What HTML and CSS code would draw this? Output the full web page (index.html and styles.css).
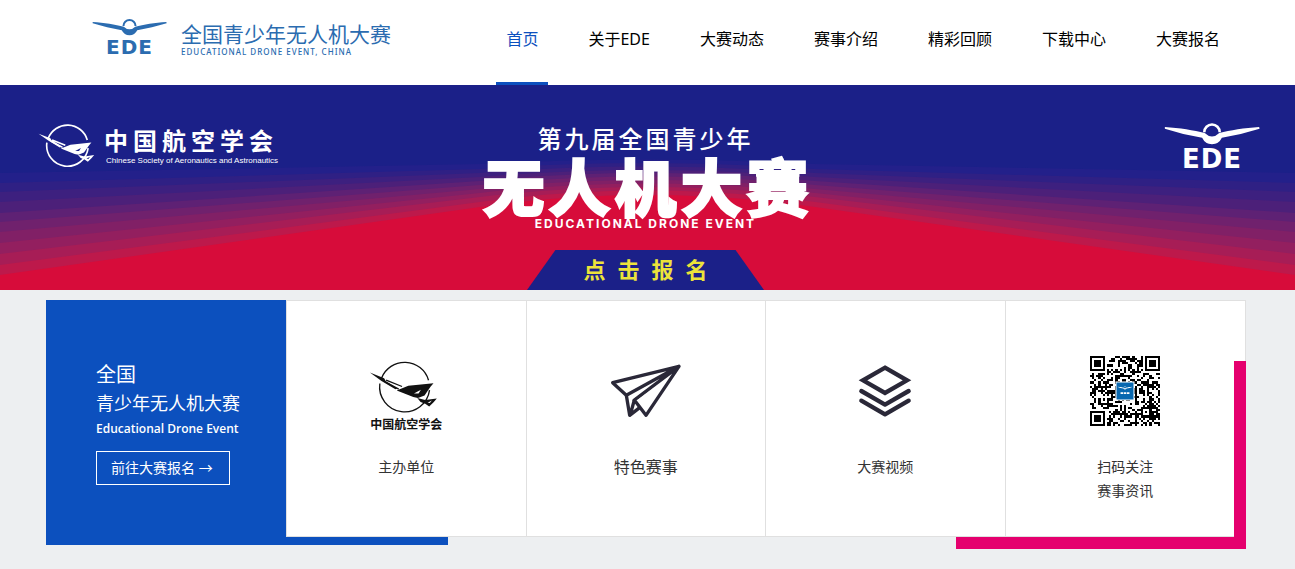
FILE: index.html
```html
<!DOCTYPE html>
<html lang="zh-CN">
<head>
  <meta charset="UTF-8">
  <meta name="viewport" content="width=device-width, initial-scale=1">
  <title>全国青少年无人机大赛</title>
  <link rel="stylesheet" href="styles.css">
</head>
<body>

  <!-- shared logo shapes -->
  <svg class="defs" aria-hidden="true">
    <symbol id="wings" viewBox="36 54 224 52">
      <path d="M130 77A18 18 0 0 1 166 77" fill="none" stroke="currentColor" stroke-width="6"/>
      <path d="M38 65C72 67 106 73 131 79Q139 87 148 87Q157 87 165 79C190 73 224 67 258 65L259 69L215 81L171 90Q164 105 148 105Q132 105 125 90L81 81L38 69Z" fill="currentColor"/>
    </symbol>
    <symbol id="plane-ring" viewBox="87 60 225 160">
      <path d="M124 112A75 75 0 0 1 266 118M269 148A75 75 0 0 1 119 128" fill="none" stroke="currentColor"/>
      <path d="M89 95L132 112L137 121L172 143L166 145L124 120Z" fill="currentColor"/>
      <path d="M138 118L186 137M134 122L176 145" fill="none" stroke="currentColor"/>
      <path fill-rule="evenodd" d="M170 149L205 135L281 127L272 138L254 164L234 172L220 169ZM222 158L236 158L243 147Z" fill="currentColor"/>
      <path fill-rule="evenodd" d="M232 172L256 178L291 173L282 184L268 197L256 189L242 184ZM263 186L270 187L276 179Z" fill="currentColor"/>
    </symbol>
  </svg>

  <header class="header">
    <a class="logo" href="#">
      <span class="ede">
        <svg class="ede-wings"><use href="#wings"/></svg>
        <b>EDE</b>
      </span>
      <span class="logo-text">
        <strong>全国青少年无人机大赛</strong>
        <small>EDUCATIONAL DRONE EVENT, CHINA</small>
      </span>
    </a>
    <nav class="nav">
      <a class="active" href="#">首页</a>
      <a href="#">关于EDE</a>
      <a href="#">大赛动态</a>
      <a href="#">赛事介绍</a>
      <a href="#">精彩回顾</a>
      <a href="#">下载中心</a>
      <a href="#">大赛报名</a>
    </nav>
  </header>

  <section class="banner">
    <svg class="rays" viewBox="0 0 1295 205" preserveAspectRatio="none" aria-hidden="true">
      <path fill="#23208a" d="M0 88L480 79Q645 70 815 79L1295 88V205H0Z"/>
      <path fill="#2f2084" d="M0 98L480 84Q645 72 815 84L1295 98V205H0Z"/>
      <path fill="#3d207f" d="M0 107L480 88Q645 75 815 88L1295 107V205H0Z"/>
      <path fill="#4c2079" d="M0 117L480 92Q645 78 815 92L1295 117V205H0Z"/>
      <path fill="#5e2174" d="M0 128L480 96Q645 80 815 96L1295 128V205H0Z"/>
      <path fill="#70216d" d="M0 137L480 100Q645 83 815 100L1295 137V205H0Z"/>
      <path fill="#812066" d="M0 147L480 104Q645 86 815 104L1295 147V205H0Z"/>
      <path fill="#931f5f" d="M0 158L480 108Q645 89 815 108L1295 158V205H0Z"/>
      <path fill="#a71d56" d="M0 169L480 112Q645 92 815 112L1295 169V205H0Z"/>
      <path fill="#bd194b" d="M0 180L480 117Q645 94 815 117L1295 180V205H0Z"/>
      <path fill="#d70c3a" d="M0 190L480 122Q645 98 815 122L1295 190V205H0Z"/>
    </svg>
    <div class="society">
      <svg class="society-icon"><use href="#plane-ring"/></svg>
      <div class="society-text">
        <strong>中国航空学会</strong>
        <small>Chinese Society of Aeronautics and Astronautics</small>
      </div>
    </div>
    <div class="headline">
      <h2>第九届全国青少年</h2>
      <h1>无人机大赛</h1>
      <p>EDUCATIONAL DRONE EVENT</p>
      <a class="signup" href="#">点击报名</a>
    </div>
    <div class="ede ede-large">
      <svg class="ede-wings"><use href="#wings"/></svg>
      <b>EDE</b>
    </div>
  </section>

  <main class="entry">
    <div class="intro">
      <h3>全国</h3>
      <h4>青少年无人机大赛</h4>
      <p>Educational Drone Event</p>
      <a href="#">前往大赛报名 →</a>
    </div>
    <div class="cards">
      <a class="card" href="#">
        <span class="icon organizer">
          <svg class="organizer-icon"><use href="#plane-ring"/></svg>
          <b>中国航空学会</b>
        </span>
        <span class="label">主办单位</span>
      </a>
      <a class="card" href="#">
        <span class="icon">
          <svg width="72" height="56" viewBox="60 56 216 168" fill="none" stroke="#2a2838" stroke-width="10" stroke-linejoin="round">
            <path d="M68 115L267 66L168 213L133 167L267 66L109 153Z"/>
            <path d="M109 153L119 213L150 189M133 167L122 207" />
            <path d="M128 168L267 66L145 162Z" fill="#2a2838" stroke-width="2"/>
          </svg>
        </span>
        <span class="label label-big">特色赛事</span>
      </a>
      <a class="card" href="#">
        <span class="icon">
          <svg width="54" height="54" viewBox="58 57 162 162" fill="none" stroke="#2a2838" stroke-width="13" stroke-linecap="round">
            <path d="M139 68L205 106L139 144L73 106Z"/>
            <path d="M68 138L139 179L210 138M68 167L139 208L210 167" stroke-linejoin="round"/>
          </svg>
        </span>
        <span class="label">大赛视频</span>
      </a>
      <div class="card">
        <span class="icon">
          <svg id="qr" width="70" height="70" viewBox="0 0 33 33">
            <path id="qrCells" fill="#000" shape-rendering="crispEdges"/>
            <path fill="#fff" d="M12 12h9v9h-9z"/>
            <path fill="#0868b0" d="M12.500 12.500h8v8h-8z"/>
            <g color="#fff"><use href="#wings" x="13" y="14" width="7" height="2"/></g>
            <path stroke="#fff" stroke-width=".8" stroke-dasharray="1.200 .3" d="M14.400 17.500h4.200"/>
          </svg>
        </span>
        <span class="label">扫码关注<br>赛事资讯</span>
      </div>
    </div>
  </main>

  <script>
  (function() {
    const size = 33;
    let seed = 2023;
    let d = '';

    // concentric squares: finder (r = 3) and alignment (r = 2) marks
    function mark(x, y, cx, cy, r) {
      const dist = Math.max(Math.abs(x - cx), Math.abs(y - cy));
      if (dist > r + (r === 3 ? 1 : 0)) return null;
      return r === 3 ? dist === 3 || dist < 2 : dist !== 1;
    }

    for (let y = 0; y < size; y++) {
      for (let x = 0; x < size; x++) {
        seed = (seed * 1103515245 + 12345) % 2147483648;
        const on = mark(x, y, 3, 3, 3) ?? mark(x, y, 29, 3, 3) ?? mark(x, y, 3, 29, 3)
          ?? mark(x, y, 26, 26, 2)
          ?? (x === 6 || y === 6 ? (x + y) % 2 === 0 : seed / 2147483648 > 0.48);
        if (on) d += 'M' + x + ' ' + y + 'h1v1h-1z';
      }
    }
    document.getElementById('qrCells').setAttribute('d', d);
  })();
  </script>

</body>
</html>
```

FILE: styles.css
```css
* { box-sizing: border-box; margin: 0; padding: 0; }
body { font-family: "Noto Sans", "Noto Sans CJK SC", sans-serif; font-size: 14px; background: #edeff1; color: #333; }
a { color: inherit; text-decoration: none; }
.defs { position: absolute; width: 0; height: 0; }

/* header */
.header { display: flex; justify-content: space-between; min-height: 85px; padding: 0 65px 0 92px; background: #fff; }
.logo { display: flex; gap: 14px; padding-top: 18px; color: #2b6cb0; }
.ede { display: flex; flex-direction: column; align-items: center; }
.ede-wings { width: 75px; height: 18px; }
.ede b { font: 700 20px/22px "DejaVu Sans", sans-serif; letter-spacing: 1px; }
.logo-text { display: flex; flex-direction: column; padding-top: 4px; }
.logo-text strong { font: 400 21px/22px "Noto Sans CJK SC", sans-serif; }
.logo-text small { margin-top: 4px; font-size: 8px; line-height: 8px; font-weight: 500; letter-spacing: 1px; }

.nav { display: flex; gap: 30px; }
.nav a { padding: 0 10px; font-size: 16px; line-height: 78px; color: #000; border-bottom: 3px solid transparent; }
.nav a.active { color: #0c50be; border-color: #0c50be; }

/* banner */
.banner { position: relative; display: grid; grid-template-columns: 1fr auto 1fr; align-items: start; padding: 37px 35px 0 31px; background: #1b2088; color: #fff; }
.rays { position: absolute; inset: 0; width: 100%; height: 100%; }
.society, .headline, .ede-large { position: relative; }
.society { display: flex; gap: 4px; padding: 2px 0 0 7px; }
.society-icon { width: 62px; height: 44px; stroke-width: 6px; }
.society-text { display: flex; flex-direction: column; padding-top: 4px; }
.society-text strong { font: 700 24px/24px "Noto Sans CJK SC", sans-serif; letter-spacing: 5px; }
.society-text small { margin-top: 4px; padding-left: 2px; font: 8px/10px "Liberation Sans", sans-serif; white-space: nowrap; }
.ede-large { justify-self: end; }
.ede-large .ede-wings { width: 96px; height: 23px; }
.ede-large b { font-size: 26px; line-height: 28px; }

.headline { display: flex; flex-direction: column; align-items: center; text-align: center; }
.headline h2 { font: 500 24px/32px "Noto Sans CJK SC", sans-serif; letter-spacing: 3px; }
.headline h1 { margin: 2px 0 4px; font: 900 62px/58px "Noto Sans CJK SC", sans-serif; letter-spacing: 4px; text-indent: 4px; -webkit-text-stroke: 2px #fff; }
.headline p { font: 700 12px/12px Inter, sans-serif; letter-spacing: 2px; }
.signup { width: 237px; height: 40px; margin-top: 20px; font: 700 22px/36px "Noto Sans CJK SC", sans-serif; letter-spacing: 12px; text-indent: 12px; color: #ece33a; background: #1b2088; clip-path: polygon(12% 0, 88% 0, 100% 100%, 0 100%); }

/* entry blocks */
.entry { position: relative; display: flex; align-items: stretch; margin: 10px 49px 20px 46px; padding-bottom: 8px; }
.entry::before { content: ""; position: absolute; left: 0; bottom: 0; width: 402px; height: 8px; background: #0c50be; }
.entry::after { content: ""; position: absolute; right: 0; top: 61px; bottom: -4px; width: 278px; border: solid #e5006e; border-width: 0 12px 12px 0; pointer-events: none; }
.intro { flex: 0 0 20%; padding: 61px 0 52px 50px; background: #0c50be; color: #fff; }
.intro h3 { font-size: 20px; line-height: 28px; font-weight: 400; }
.intro h4 { font-size: 18px; line-height: 28px; font-weight: 400; white-space: nowrap; }
.intro p { font: 600 12px/24px "Open Sans", sans-serif; }
.intro a { display: inline-block; margin-top: 10px; padding: 0 16px 0 14px; line-height: 32px; border: 1px solid #fff; }

.cards { flex: 1; display: grid; grid-template-columns: repeat(4, 1fr); background: #fff; border: 1px solid #e0e0e0; }
.card { display: flex; flex-direction: column; align-items: center; padding-top: 45px; border-right: 1px solid #e0e0e0; }
.card:last-child { border-right: 0; }
.icon { display: flex; flex-direction: column; align-items: center; justify-content: center; height: 90px; margin-bottom: 19px; }
.organizer { color: #111; padding-top: 12px; }
.organizer-icon { width: 75px; height: 53px; stroke-width: 4px; }
.organizer b { font: 700 12px/20px "Noto Sans CJK SC", sans-serif; }
.label { line-height: 24px; }
.label-big { font-size: 16px; }
```
